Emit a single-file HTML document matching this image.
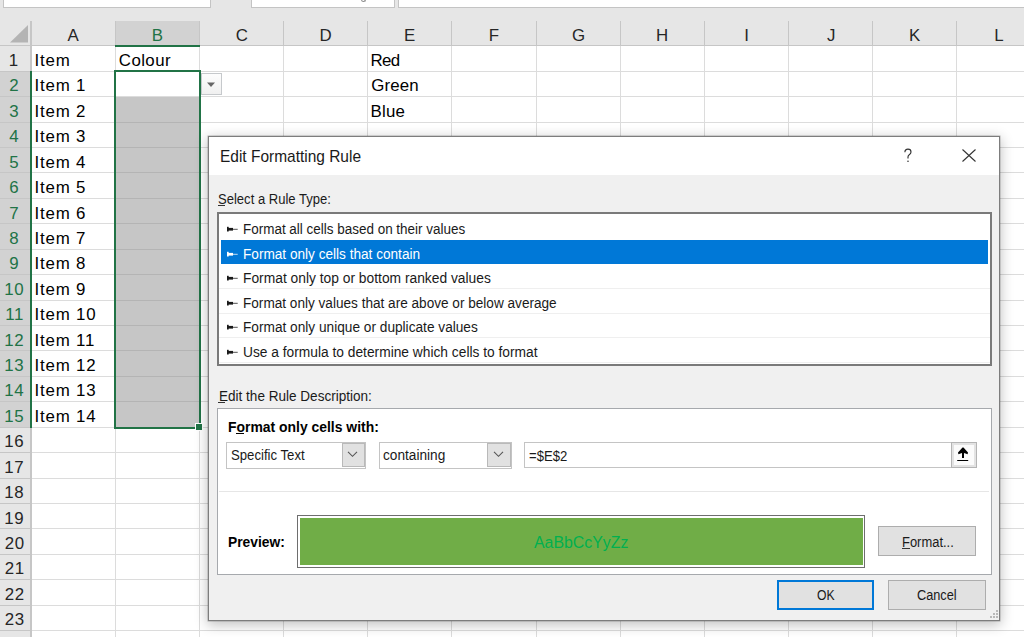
<!DOCTYPE html>
<html><head><meta charset="utf-8"><style>
html,body{margin:0;padding:0;width:1024px;height:637px;overflow:hidden;background:#fff;font-family:"Liberation Sans", sans-serif;position:relative}
</style></head><body>
<div style="position:absolute;left:0px;top:0px;width:1024px;height:21px;background:#e6e6e6"></div>
<div style="position:absolute;left:3px;top:-2px;width:208px;height:10px;background:#fff;border:1px solid #c4c4c4;box-sizing:border-box"></div>
<div style="position:absolute;left:251px;top:-2px;width:144px;height:10px;background:#fff;border:1px solid #c4c4c4;box-sizing:border-box"></div>
<div style="position:absolute;left:398px;top:-2px;width:640px;height:10px;background:#fff;border:1px solid #c4c4c4;box-sizing:border-box"></div>
<div style="position:absolute;left:361px;top:-3px;width:5px;height:5px;border-radius:3px;border:1px solid #8a8a8a;border-top:none;box-sizing:border-box"></div>
<div style="position:absolute;left:0px;top:21px;width:1024px;height:25px;background:#e6e6e6"></div>
<div style="position:absolute;left:115px;top:21px;width:85px;height:25px;background:#d2d2d2"></div>
<svg style="position:absolute;left:0;top:0" width="40" height="50"><polygon points="28,25 28,42.5 10,42.5" fill="#b4b4b4"/></svg>
<div style="position:absolute;left:30px;top:21px;width:2px;height:25px;background:#c6c6c6"></div>
<div style="position:absolute;left:115px;top:21px;width:1px;height:25px;background:#c6c6c6"></div>
<div style="position:absolute;left:199px;top:21px;width:1px;height:25px;background:#c6c6c6"></div>
<div style="position:absolute;left:283px;top:21px;width:1px;height:25px;background:#c6c6c6"></div>
<div style="position:absolute;left:367px;top:21px;width:1px;height:25px;background:#c6c6c6"></div>
<div style="position:absolute;left:451px;top:21px;width:1px;height:25px;background:#c6c6c6"></div>
<div style="position:absolute;left:536px;top:21px;width:1px;height:25px;background:#c6c6c6"></div>
<div style="position:absolute;left:620px;top:21px;width:1px;height:25px;background:#c6c6c6"></div>
<div style="position:absolute;left:704px;top:21px;width:1px;height:25px;background:#c6c6c6"></div>
<div style="position:absolute;left:788px;top:21px;width:1px;height:25px;background:#c6c6c6"></div>
<div style="position:absolute;left:872px;top:21px;width:1px;height:25px;background:#c6c6c6"></div>
<div style="position:absolute;left:956px;top:21px;width:1px;height:25px;background:#c6c6c6"></div>
<div style="position:absolute;left:1041px;top:21px;width:1px;height:25px;background:#c6c6c6"></div>
<div style="position:absolute;left:0px;top:45px;width:1024px;height:1px;background:#c6c6c6"></div>
<div style="position:absolute;left:0px;top:46px;width:30px;height:600px;background:#e6e6e6"></div>
<div style="position:absolute;left:0px;top:71px;width:30px;height:356px;background:#d2d2d2"></div>
<div style="position:absolute;left:30px;top:46px;width:2px;height:600px;background:#c6c6c6"></div>
<div style="position:absolute;left:30px;top:71px;width:2px;height:357px;background:#217346"></div>
<div style="position:absolute;left:32px;top:46px;width:1000px;height:600px;background:#fff"></div>
<div style="position:absolute;left:116px;top:96px;width:83px;height:331px;background:#c6c6c6"></div>
<div style="position:absolute;left:0px;top:71px;width:30px;height:1px;background:#c6c6c6"></div>
<div style="position:absolute;left:32px;top:71px;width:1000px;height:1px;background:#dcdcdc"></div>
<div style="position:absolute;left:0px;top:96px;width:30px;height:1px;background:#c6c6c6"></div>
<div style="position:absolute;left:32px;top:96px;width:1000px;height:1px;background:#dcdcdc"></div>
<div style="position:absolute;left:0px;top:122px;width:30px;height:1px;background:#c6c6c6"></div>
<div style="position:absolute;left:32px;top:122px;width:1000px;height:1px;background:#dcdcdc"></div>
<div style="position:absolute;left:116px;top:122px;width:83px;height:1px;background:#b4b4b4"></div>
<div style="position:absolute;left:0px;top:147px;width:30px;height:1px;background:#c6c6c6"></div>
<div style="position:absolute;left:32px;top:147px;width:1000px;height:1px;background:#dcdcdc"></div>
<div style="position:absolute;left:116px;top:147px;width:83px;height:1px;background:#b4b4b4"></div>
<div style="position:absolute;left:0px;top:172px;width:30px;height:1px;background:#c6c6c6"></div>
<div style="position:absolute;left:32px;top:172px;width:1000px;height:1px;background:#dcdcdc"></div>
<div style="position:absolute;left:116px;top:172px;width:83px;height:1px;background:#b4b4b4"></div>
<div style="position:absolute;left:0px;top:198px;width:30px;height:1px;background:#c6c6c6"></div>
<div style="position:absolute;left:32px;top:198px;width:1000px;height:1px;background:#dcdcdc"></div>
<div style="position:absolute;left:116px;top:198px;width:83px;height:1px;background:#b4b4b4"></div>
<div style="position:absolute;left:0px;top:223px;width:30px;height:1px;background:#c6c6c6"></div>
<div style="position:absolute;left:32px;top:223px;width:1000px;height:1px;background:#dcdcdc"></div>
<div style="position:absolute;left:116px;top:223px;width:83px;height:1px;background:#b4b4b4"></div>
<div style="position:absolute;left:0px;top:249px;width:30px;height:1px;background:#c6c6c6"></div>
<div style="position:absolute;left:32px;top:249px;width:1000px;height:1px;background:#dcdcdc"></div>
<div style="position:absolute;left:116px;top:249px;width:83px;height:1px;background:#b4b4b4"></div>
<div style="position:absolute;left:0px;top:274px;width:30px;height:1px;background:#c6c6c6"></div>
<div style="position:absolute;left:32px;top:274px;width:1000px;height:1px;background:#dcdcdc"></div>
<div style="position:absolute;left:116px;top:274px;width:83px;height:1px;background:#b4b4b4"></div>
<div style="position:absolute;left:0px;top:300px;width:30px;height:1px;background:#c6c6c6"></div>
<div style="position:absolute;left:32px;top:300px;width:1000px;height:1px;background:#dcdcdc"></div>
<div style="position:absolute;left:116px;top:300px;width:83px;height:1px;background:#b4b4b4"></div>
<div style="position:absolute;left:0px;top:325px;width:30px;height:1px;background:#c6c6c6"></div>
<div style="position:absolute;left:32px;top:325px;width:1000px;height:1px;background:#dcdcdc"></div>
<div style="position:absolute;left:116px;top:325px;width:83px;height:1px;background:#b4b4b4"></div>
<div style="position:absolute;left:0px;top:350px;width:30px;height:1px;background:#c6c6c6"></div>
<div style="position:absolute;left:32px;top:350px;width:1000px;height:1px;background:#dcdcdc"></div>
<div style="position:absolute;left:116px;top:350px;width:83px;height:1px;background:#b4b4b4"></div>
<div style="position:absolute;left:0px;top:376px;width:30px;height:1px;background:#c6c6c6"></div>
<div style="position:absolute;left:32px;top:376px;width:1000px;height:1px;background:#dcdcdc"></div>
<div style="position:absolute;left:116px;top:376px;width:83px;height:1px;background:#b4b4b4"></div>
<div style="position:absolute;left:0px;top:401px;width:30px;height:1px;background:#c6c6c6"></div>
<div style="position:absolute;left:32px;top:401px;width:1000px;height:1px;background:#dcdcdc"></div>
<div style="position:absolute;left:116px;top:401px;width:83px;height:1px;background:#b4b4b4"></div>
<div style="position:absolute;left:0px;top:427px;width:30px;height:1px;background:#c6c6c6"></div>
<div style="position:absolute;left:32px;top:427px;width:1000px;height:1px;background:#dcdcdc"></div>
<div style="position:absolute;left:0px;top:452px;width:30px;height:1px;background:#c6c6c6"></div>
<div style="position:absolute;left:32px;top:452px;width:1000px;height:1px;background:#dcdcdc"></div>
<div style="position:absolute;left:0px;top:478px;width:30px;height:1px;background:#c6c6c6"></div>
<div style="position:absolute;left:32px;top:478px;width:1000px;height:1px;background:#dcdcdc"></div>
<div style="position:absolute;left:0px;top:503px;width:30px;height:1px;background:#c6c6c6"></div>
<div style="position:absolute;left:32px;top:503px;width:1000px;height:1px;background:#dcdcdc"></div>
<div style="position:absolute;left:0px;top:528px;width:30px;height:1px;background:#c6c6c6"></div>
<div style="position:absolute;left:32px;top:528px;width:1000px;height:1px;background:#dcdcdc"></div>
<div style="position:absolute;left:0px;top:554px;width:30px;height:1px;background:#c6c6c6"></div>
<div style="position:absolute;left:32px;top:554px;width:1000px;height:1px;background:#dcdcdc"></div>
<div style="position:absolute;left:0px;top:579px;width:30px;height:1px;background:#c6c6c6"></div>
<div style="position:absolute;left:32px;top:579px;width:1000px;height:1px;background:#dcdcdc"></div>
<div style="position:absolute;left:0px;top:605px;width:30px;height:1px;background:#c6c6c6"></div>
<div style="position:absolute;left:32px;top:605px;width:1000px;height:1px;background:#dcdcdc"></div>
<div style="position:absolute;left:0px;top:630px;width:30px;height:1px;background:#c6c6c6"></div>
<div style="position:absolute;left:32px;top:630px;width:1000px;height:1px;background:#dcdcdc"></div>
<div style="position:absolute;left:115px;top:46px;width:1px;height:600px;background:#dcdcdc"></div>
<div style="position:absolute;left:199px;top:46px;width:1px;height:600px;background:#dcdcdc"></div>
<div style="position:absolute;left:283px;top:46px;width:1px;height:600px;background:#dcdcdc"></div>
<div style="position:absolute;left:367px;top:46px;width:1px;height:600px;background:#dcdcdc"></div>
<div style="position:absolute;left:451px;top:46px;width:1px;height:600px;background:#dcdcdc"></div>
<div style="position:absolute;left:536px;top:46px;width:1px;height:600px;background:#dcdcdc"></div>
<div style="position:absolute;left:620px;top:46px;width:1px;height:600px;background:#dcdcdc"></div>
<div style="position:absolute;left:704px;top:46px;width:1px;height:600px;background:#dcdcdc"></div>
<div style="position:absolute;left:788px;top:46px;width:1px;height:600px;background:#dcdcdc"></div>
<div style="position:absolute;left:872px;top:46px;width:1px;height:600px;background:#dcdcdc"></div>
<div style="position:absolute;left:956px;top:46px;width:1px;height:600px;background:#dcdcdc"></div>
<div style="position:absolute;left:1041px;top:46px;width:1px;height:600px;background:#dcdcdc"></div>
<div style="position:absolute;left:115px;top:45px;width:85px;height:2px;background:#217346"></div>
<div style="position:absolute;left:114px;top:70px;width:87px;height:359px;border:2px solid #217346;box-sizing:border-box"></div>
<div style="position:absolute;left:196px;top:424px;width:6px;height:6px;background:#217346;outline:1px solid #fff"></div>
<div style="position:absolute;left:201px;top:73px;width:21px;height:22px;background:linear-gradient(#fdfdfd,#f0f0f0);border:1px solid #c6c9cc;box-sizing:border-box"></div>
<svg style="position:absolute;left:206px;top:81px" width="10" height="7"><polygon points="1,1.5 9,1.5 5,6" fill="#666"/></svg>
<div style="position:absolute;left:208px;top:136px;width:792px;height:485px;background:#f0f0f0;border:1px solid #7d7d7d;box-sizing:border-box;box-shadow:0 0 0 0.5px rgba(0,0,0,0.25), 0 3px 12px 1px rgba(0,0,0,0.24)"></div>
<div style="position:absolute;left:209px;top:137px;width:790px;height:38px;background:#fff"></div>
<svg style="position:absolute;left:900px;top:145px" width="16" height="20"><path d="M4.9 7.2 C4.9 5.2 6.2 4.1 8 4.1 C9.9 4.1 11 5.2 11 6.9 C11 8.3 10.2 9 9.2 9.8 C8.4 10.4 8 11 8 12 L8 13.4" stroke="#333" stroke-width="1.15" fill="none"/><circle cx="8" cy="16.2" r="0.8" fill="#333"/></svg>
<svg style="position:absolute;left:960px;top:147px" width="18" height="17"><path d="M2.5 2.5 L15.5 14.5 M15.5 2.5 L2.5 14.5" stroke="#333" stroke-width="1.1" fill="none"/></svg>
<div style="position:absolute;left:218px;top:205px;width:7px;height:1px;background:#333"></div>
<div style="position:absolute;left:217px;top:212px;width:775px;height:154px;background:#fff;border:2px solid #7a7a7a;box-sizing:border-box"></div>
<div style="position:absolute;left:221px;top:240px;width:767px;height:24px;background:#0078d7"></div>
<div style="position:absolute;left:219px;top:288px;width:771px;height:1px;background:#efefef"></div>
<div style="position:absolute;left:219px;top:313px;width:771px;height:1px;background:#efefef"></div>
<div style="position:absolute;left:219px;top:337px;width:771px;height:1px;background:#efefef"></div>
<div style="position:absolute;left:219px;top:362px;width:771px;height:1px;background:#efefef"></div>
<svg style="position:absolute;left:226px;top:223px" width="14" height="12"><rect x="1" y="3.8" width="1.7" height="4.7" fill="#1a1a1a"/><rect x="2" y="4.9" width="5" height="2.7" fill="#1a1a1a"/><rect x="7" y="5.8" width="4.7" height="1" fill="#1a1a1a" opacity="0.75"/></svg>
<svg style="position:absolute;left:226px;top:248px" width="14" height="12"><rect x="1" y="3.8" width="1.7" height="4.7" fill="#fff"/><rect x="2" y="4.9" width="5" height="2.7" fill="#fff"/><rect x="7" y="5.8" width="4.7" height="1" fill="#fff" opacity="0.75"/></svg>
<svg style="position:absolute;left:226px;top:272px" width="14" height="12"><rect x="1" y="3.8" width="1.7" height="4.7" fill="#1a1a1a"/><rect x="2" y="4.9" width="5" height="2.7" fill="#1a1a1a"/><rect x="7" y="5.8" width="4.7" height="1" fill="#1a1a1a" opacity="0.75"/></svg>
<svg style="position:absolute;left:226px;top:297px" width="14" height="12"><rect x="1" y="3.8" width="1.7" height="4.7" fill="#1a1a1a"/><rect x="2" y="4.9" width="5" height="2.7" fill="#1a1a1a"/><rect x="7" y="5.8" width="4.7" height="1" fill="#1a1a1a" opacity="0.75"/></svg>
<svg style="position:absolute;left:226px;top:321px" width="14" height="12"><rect x="1" y="3.8" width="1.7" height="4.7" fill="#1a1a1a"/><rect x="2" y="4.9" width="5" height="2.7" fill="#1a1a1a"/><rect x="7" y="5.8" width="4.7" height="1" fill="#1a1a1a" opacity="0.75"/></svg>
<svg style="position:absolute;left:226px;top:346px" width="14" height="12"><rect x="1" y="3.8" width="1.7" height="4.7" fill="#1a1a1a"/><rect x="2" y="4.9" width="5" height="2.7" fill="#1a1a1a"/><rect x="7" y="5.8" width="4.7" height="1" fill="#1a1a1a" opacity="0.75"/></svg>
<div style="position:absolute;left:218px;top:402px;width:7px;height:1px;background:#333"></div>
<div style="position:absolute;left:217px;top:408px;width:775px;height:167px;background:#fff;border:1px solid #a6a9ad;box-sizing:border-box"></div>
<div style="position:absolute;left:236px;top:433px;width:8px;height:1px;background:#000"></div>
<div style="position:absolute;left:226px;top:442px;width:140px;height:27px;background:#fff;border:1px solid #c4c4c4;box-sizing:border-box"></div>
<div style="position:absolute;left:342px;top:443px;width:23px;height:24px;background:#e1e1e1;border:1px solid #b9b9b9;box-sizing:border-box"></div>
<svg style="position:absolute;left:346px;top:450px" width="13" height="9"><path d="M2 1.8 L6.5 6.3 L11 1.8" stroke="#555" stroke-width="1.1" fill="none"/></svg>
<div style="position:absolute;left:379px;top:442px;width:133px;height:27px;background:#fff;border:1px solid #c4c4c4;box-sizing:border-box"></div>
<div style="position:absolute;left:487px;top:443px;width:24px;height:24px;background:#e1e1e1;border:1px solid #b9b9b9;box-sizing:border-box"></div>
<svg style="position:absolute;left:492px;top:450px" width="13" height="9"><path d="M2 1.8 L6.5 6.3 L11 1.8" stroke="#555" stroke-width="1.1" fill="none"/></svg>
<div style="position:absolute;left:524px;top:442px;width:453px;height:26px;background:#fff;border:1px solid #c4c4c4;box-sizing:border-box"></div>
<div style="position:absolute;left:951px;top:442px;width:26px;height:26px;background:#fbfbfb;border:1px solid #b4b4b4;box-shadow:inset 0 0 0 2px #e3e3e3;box-sizing:border-box"></div>
<svg style="position:absolute;left:954px;top:445px" width="18" height="18"><path d="M8.5 2.6 L9.5 2.6 L14 7.6 L13.6 9.3 L10 8 L10 13 L8 13 L8 8 L4.4 9.3 L4 7.6 Z" fill="#000"/><rect x="3.2" y="15" width="11" height="1" fill="#000"/></svg>
<div style="position:absolute;left:219px;top:491px;width:770px;height:1px;background:#e6e6e6"></div>
<div style="position:absolute;left:297px;top:515px;width:568px;height:53px;background:#fff;border:1px solid #6e6e6e;box-sizing:border-box"></div>
<div style="position:absolute;left:300px;top:518px;width:563px;height:47px;background:#70ad47"></div>
<div style="position:absolute;left:878px;top:526px;width:98px;height:30px;background:#e1e1e1;border:1px solid #adadad;box-sizing:border-box"></div>
<div style="position:absolute;left:902px;top:548px;width:8px;height:1px;background:#333"></div>
<div style="position:absolute;left:777px;top:580px;width:97px;height:30px;background:#e1e1e1;border:2px solid #0078d7;box-sizing:border-box"></div>
<div style="position:absolute;left:888px;top:580px;width:98px;height:30px;background:#e1e1e1;border:1px solid #adadad;box-sizing:border-box"></div>
<svg style="position:absolute;left:980px;top:600px" width="20" height="20"><rect x="16" y="10" width="2" height="2" fill="#b8b8b8"/><rect x="13" y="13" width="2" height="2" fill="#b8b8b8"/><rect x="16" y="13" width="2" height="2" fill="#b8b8b8"/><rect x="10" y="16" width="2" height="2" fill="#b8b8b8"/><rect x="13" y="16" width="2" height="2" fill="#b8b8b8"/><rect x="16" y="16" width="2" height="2" fill="#b8b8b8"/></svg>
<div style="position:absolute;left:67.48px;top:28px;font-size:16.86px;line-height:16.86px;letter-spacing:0.000px;color:#262626;font-weight:normal;white-space:pre">A</div>
<div style="position:absolute;left:151.64px;top:28px;font-size:16.86px;line-height:16.86px;letter-spacing:0.000px;color:#217346;font-weight:normal;white-space:pre">B</div>
<div style="position:absolute;left:235.80px;top:28px;font-size:16.86px;line-height:16.86px;letter-spacing:0.000px;color:#262626;font-weight:normal;white-space:pre">C</div>
<div style="position:absolute;left:319.46px;top:28px;font-size:16.86px;line-height:16.86px;letter-spacing:0.000px;color:#262626;font-weight:normal;white-space:pre">D</div>
<div style="position:absolute;left:404.12px;top:28px;font-size:16.86px;line-height:16.86px;letter-spacing:0.000px;color:#262626;font-weight:normal;white-space:pre">E</div>
<div style="position:absolute;left:488.78px;top:28px;font-size:16.86px;line-height:16.86px;letter-spacing:0.000px;color:#262626;font-weight:normal;white-space:pre">F</div>
<div style="position:absolute;left:571.94px;top:28px;font-size:16.86px;line-height:16.86px;letter-spacing:0.000px;color:#262626;font-weight:normal;white-space:pre">G</div>
<div style="position:absolute;left:656.10px;top:28px;font-size:16.86px;line-height:16.86px;letter-spacing:0.000px;color:#262626;font-weight:normal;white-space:pre">H</div>
<div style="position:absolute;left:744.26px;top:28px;font-size:16.86px;line-height:16.86px;letter-spacing:0.000px;color:#262626;font-weight:normal;white-space:pre">I</div>
<div style="position:absolute;left:826.92px;top:28px;font-size:16.86px;line-height:16.86px;letter-spacing:0.000px;color:#262626;font-weight:normal;white-space:pre">J</div>
<div style="position:absolute;left:909.08px;top:28px;font-size:16.86px;line-height:16.86px;letter-spacing:0.000px;color:#262626;font-weight:normal;white-space:pre">K</div>
<div style="position:absolute;left:994.24px;top:28px;font-size:16.86px;line-height:16.86px;letter-spacing:0.000px;color:#262626;font-weight:normal;white-space:pre">L</div>
<div style="position:absolute;left:8.70px;top:53px;font-size:16.86px;line-height:16.86px;letter-spacing:0.600px;color:#262626;font-weight:normal;white-space:pre">1</div>
<div style="position:absolute;left:9.20px;top:78px;font-size:16.86px;line-height:16.86px;letter-spacing:0.600px;color:#217346;font-weight:normal;white-space:pre">2</div>
<div style="position:absolute;left:9.20px;top:104px;font-size:16.86px;line-height:16.86px;letter-spacing:0.600px;color:#217346;font-weight:normal;white-space:pre">3</div>
<div style="position:absolute;left:9.20px;top:129px;font-size:16.86px;line-height:16.86px;letter-spacing:0.600px;color:#217346;font-weight:normal;white-space:pre">4</div>
<div style="position:absolute;left:9.20px;top:155px;font-size:16.86px;line-height:16.86px;letter-spacing:0.600px;color:#217346;font-weight:normal;white-space:pre">5</div>
<div style="position:absolute;left:9.20px;top:180px;font-size:16.86px;line-height:16.86px;letter-spacing:0.600px;color:#217346;font-weight:normal;white-space:pre">6</div>
<div style="position:absolute;left:9.20px;top:206px;font-size:16.86px;line-height:16.86px;letter-spacing:0.600px;color:#217346;font-weight:normal;white-space:pre">7</div>
<div style="position:absolute;left:9.20px;top:231px;font-size:16.86px;line-height:16.86px;letter-spacing:0.600px;color:#217346;font-weight:normal;white-space:pre">8</div>
<div style="position:absolute;left:9.20px;top:256px;font-size:16.86px;line-height:16.86px;letter-spacing:0.600px;color:#217346;font-weight:normal;white-space:pre">9</div>
<div style="position:absolute;left:4.20px;top:282px;font-size:16.86px;line-height:16.86px;letter-spacing:0.600px;color:#217346;font-weight:normal;white-space:pre">10</div>
<div style="position:absolute;left:5.20px;top:307px;font-size:16.86px;line-height:16.86px;letter-spacing:0.600px;color:#217346;font-weight:normal;white-space:pre">11</div>
<div style="position:absolute;left:4.20px;top:333px;font-size:16.86px;line-height:16.86px;letter-spacing:0.600px;color:#217346;font-weight:normal;white-space:pre">12</div>
<div style="position:absolute;left:4.20px;top:358px;font-size:16.86px;line-height:16.86px;letter-spacing:0.600px;color:#217346;font-weight:normal;white-space:pre">13</div>
<div style="position:absolute;left:4.20px;top:383px;font-size:16.86px;line-height:16.86px;letter-spacing:0.600px;color:#217346;font-weight:normal;white-space:pre">14</div>
<div style="position:absolute;left:4.20px;top:409px;font-size:16.86px;line-height:16.86px;letter-spacing:0.600px;color:#217346;font-weight:normal;white-space:pre">15</div>
<div style="position:absolute;left:4.20px;top:434px;font-size:16.86px;line-height:16.86px;letter-spacing:0.600px;color:#262626;font-weight:normal;white-space:pre">16</div>
<div style="position:absolute;left:4.20px;top:460px;font-size:16.86px;line-height:16.86px;letter-spacing:0.600px;color:#262626;font-weight:normal;white-space:pre">17</div>
<div style="position:absolute;left:4.20px;top:485px;font-size:16.86px;line-height:16.86px;letter-spacing:0.600px;color:#262626;font-weight:normal;white-space:pre">18</div>
<div style="position:absolute;left:4.20px;top:511px;font-size:16.86px;line-height:16.86px;letter-spacing:0.600px;color:#262626;font-weight:normal;white-space:pre">19</div>
<div style="position:absolute;left:4.70px;top:536px;font-size:16.86px;line-height:16.86px;letter-spacing:0.600px;color:#262626;font-weight:normal;white-space:pre">20</div>
<div style="position:absolute;left:4.70px;top:561px;font-size:16.86px;line-height:16.86px;letter-spacing:0.600px;color:#262626;font-weight:normal;white-space:pre">21</div>
<div style="position:absolute;left:4.70px;top:587px;font-size:16.86px;line-height:16.86px;letter-spacing:0.600px;color:#262626;font-weight:normal;white-space:pre">22</div>
<div style="position:absolute;left:4.70px;top:612px;font-size:16.86px;line-height:16.86px;letter-spacing:0.600px;color:#262626;font-weight:normal;white-space:pre">23</div>
<div style="position:absolute;left:34.50px;top:53px;font-size:16.86px;line-height:16.86px;letter-spacing:0.800px;color:#000;font-weight:normal;white-space:pre">Item</div>
<div style="position:absolute;left:34.50px;top:78px;font-size:16.86px;line-height:16.86px;letter-spacing:0.800px;color:#000;font-weight:normal;white-space:pre">Item 1</div>
<div style="position:absolute;left:34.50px;top:104px;font-size:16.86px;line-height:16.86px;letter-spacing:0.800px;color:#000;font-weight:normal;white-space:pre">Item 2</div>
<div style="position:absolute;left:34.50px;top:129px;font-size:16.86px;line-height:16.86px;letter-spacing:0.800px;color:#000;font-weight:normal;white-space:pre">Item 3</div>
<div style="position:absolute;left:34.50px;top:155px;font-size:16.86px;line-height:16.86px;letter-spacing:0.800px;color:#000;font-weight:normal;white-space:pre">Item 4</div>
<div style="position:absolute;left:34.50px;top:180px;font-size:16.86px;line-height:16.86px;letter-spacing:0.800px;color:#000;font-weight:normal;white-space:pre">Item 5</div>
<div style="position:absolute;left:34.50px;top:206px;font-size:16.86px;line-height:16.86px;letter-spacing:0.800px;color:#000;font-weight:normal;white-space:pre">Item 6</div>
<div style="position:absolute;left:34.50px;top:231px;font-size:16.86px;line-height:16.86px;letter-spacing:0.800px;color:#000;font-weight:normal;white-space:pre">Item 7</div>
<div style="position:absolute;left:34.50px;top:256px;font-size:16.86px;line-height:16.86px;letter-spacing:0.800px;color:#000;font-weight:normal;white-space:pre">Item 8</div>
<div style="position:absolute;left:34.50px;top:282px;font-size:16.86px;line-height:16.86px;letter-spacing:0.800px;color:#000;font-weight:normal;white-space:pre">Item 9</div>
<div style="position:absolute;left:34.50px;top:307px;font-size:16.86px;line-height:16.86px;letter-spacing:0.800px;color:#000;font-weight:normal;white-space:pre">Item 10</div>
<div style="position:absolute;left:34.50px;top:333px;font-size:16.86px;line-height:16.86px;letter-spacing:0.800px;color:#000;font-weight:normal;white-space:pre">Item 11</div>
<div style="position:absolute;left:34.50px;top:358px;font-size:16.86px;line-height:16.86px;letter-spacing:0.800px;color:#000;font-weight:normal;white-space:pre">Item 12</div>
<div style="position:absolute;left:34.50px;top:383px;font-size:16.86px;line-height:16.86px;letter-spacing:0.800px;color:#000;font-weight:normal;white-space:pre">Item 13</div>
<div style="position:absolute;left:34.50px;top:409px;font-size:16.86px;line-height:16.86px;letter-spacing:0.800px;color:#000;font-weight:normal;white-space:pre">Item 14</div>
<div style="position:absolute;left:118.80px;top:53px;font-size:16.86px;line-height:16.86px;letter-spacing:0.420px;color:#000;font-weight:normal;white-space:pre">Colour</div>
<div style="position:absolute;left:370.50px;top:53px;font-size:16.86px;line-height:16.86px;letter-spacing:-0.700px;color:#000;font-weight:normal;white-space:pre">Red</div>
<div style="position:absolute;left:371.30px;top:78px;font-size:16.86px;line-height:16.86px;letter-spacing:0.100px;color:#000;font-weight:normal;white-space:pre">Green</div>
<div style="position:absolute;left:370.50px;top:104px;font-size:16.86px;line-height:16.86px;letter-spacing:0.233px;color:#000;font-weight:normal;white-space:pre">Blue</div>
<div style="position:absolute;left:220.00px;top:149px;font-size:15.7px;line-height:15.7px;letter-spacing:0.000px;transform:scaleX(0.9860);transform-origin:0 0;color:#1a1a1a;font-weight:normal;white-space:pre">Edit Formatting Rule</div>
<div style="position:absolute;left:218.40px;top:193px;font-size:13.81px;line-height:13.81px;letter-spacing:0.000px;transform:scaleX(0.9454);transform-origin:0 0;color:#1a1a1a;font-weight:normal;white-space:pre">Select a Rule Type:</div>
<div style="position:absolute;left:242.90px;top:222px;font-size:14.39px;line-height:14.39px;letter-spacing:0.000px;transform:scaleX(0.9363);transform-origin:0 0;color:#1a1a1a;font-weight:normal;white-space:pre">Format all cells based on their values</div>
<div style="position:absolute;left:242.90px;top:247px;font-size:14.39px;line-height:14.39px;letter-spacing:0.000px;transform:scaleX(0.9471);transform-origin:0 0;color:#fff;font-weight:normal;white-space:pre">Format only cells that contain</div>
<div style="position:absolute;left:242.90px;top:271px;font-size:14.39px;line-height:14.39px;letter-spacing:0.000px;transform:scaleX(0.9605);transform-origin:0 0;color:#1a1a1a;font-weight:normal;white-space:pre">Format only top or bottom ranked values</div>
<div style="position:absolute;left:242.90px;top:296px;font-size:14.39px;line-height:14.39px;letter-spacing:0.000px;transform:scaleX(0.9459);transform-origin:0 0;color:#1a1a1a;font-weight:normal;white-space:pre">Format only values that are above or below average</div>
<div style="position:absolute;left:242.90px;top:320px;font-size:14.39px;line-height:14.39px;letter-spacing:0.000px;transform:scaleX(0.9510);transform-origin:0 0;color:#1a1a1a;font-weight:normal;white-space:pre">Format only unique or duplicate values</div>
<div style="position:absolute;left:242.90px;top:345px;font-size:14.39px;line-height:14.39px;letter-spacing:0.000px;transform:scaleX(0.9575);transform-origin:0 0;color:#1a1a1a;font-weight:normal;white-space:pre">Use a formula to determine which cells to format</div>
<div style="position:absolute;left:218.50px;top:390px;font-size:13.81px;line-height:13.81px;letter-spacing:0.000px;transform:scaleX(0.9819);transform-origin:0 0;color:#1a1a1a;font-weight:normal;white-space:pre">Edit the Rule Description:</div>
<div style="position:absolute;left:227.90px;top:421px;font-size:13.95px;line-height:13.95px;letter-spacing:0.000px;transform:scaleX(0.9987);transform-origin:0 0;color:#000;font-weight:bold;white-space:pre">Format only cells with:</div>
<div style="position:absolute;left:231.00px;top:449px;font-size:13.95px;line-height:13.95px;letter-spacing:0.000px;transform:scaleX(0.9449);transform-origin:0 0;color:#1a1a1a;font-weight:normal;white-space:pre">Specific Text</div>
<div style="position:absolute;left:383.30px;top:449px;font-size:13.95px;line-height:13.95px;letter-spacing:0.000px;transform:scaleX(0.9797);transform-origin:0 0;color:#1a1a1a;font-weight:normal;white-space:pre">containing</div>
<div style="position:absolute;left:528.90px;top:450px;font-size:13.95px;line-height:13.95px;letter-spacing:0.000px;transform:scaleX(0.9415);transform-origin:0 0;color:#1a1a1a;font-weight:normal;white-space:pre">=$E$2</div>
<div style="position:absolute;left:227.70px;top:536px;font-size:13.95px;line-height:13.95px;letter-spacing:0.000px;transform:scaleX(0.9912);transform-origin:0 0;color:#000;font-weight:bold;white-space:pre">Preview:</div>
<div style="position:absolute;left:533.80px;top:535px;font-size:16.86px;line-height:16.86px;letter-spacing:0.000px;transform:scaleX(0.9410);transform-origin:0 0;color:#00b050;font-weight:normal;white-space:pre">AaBbCcYyZz</div>
<div style="position:absolute;left:901.70px;top:536px;font-size:13.95px;line-height:13.95px;letter-spacing:0.000px;transform:scaleX(0.9291);transform-origin:0 0;color:#1a1a1a;font-weight:normal;white-space:pre">Format...</div>
<div style="position:absolute;left:816.90px;top:589px;font-size:13.95px;line-height:13.95px;letter-spacing:0.000px;transform:scaleX(0.8750);transform-origin:0 0;color:#1a1a1a;font-weight:normal;white-space:pre">OK</div>
<div style="position:absolute;left:916.80px;top:589px;font-size:13.95px;line-height:13.95px;letter-spacing:0.000px;transform:scaleX(0.9140);transform-origin:0 0;color:#1a1a1a;font-weight:normal;white-space:pre">Cancel</div>
</body></html>
